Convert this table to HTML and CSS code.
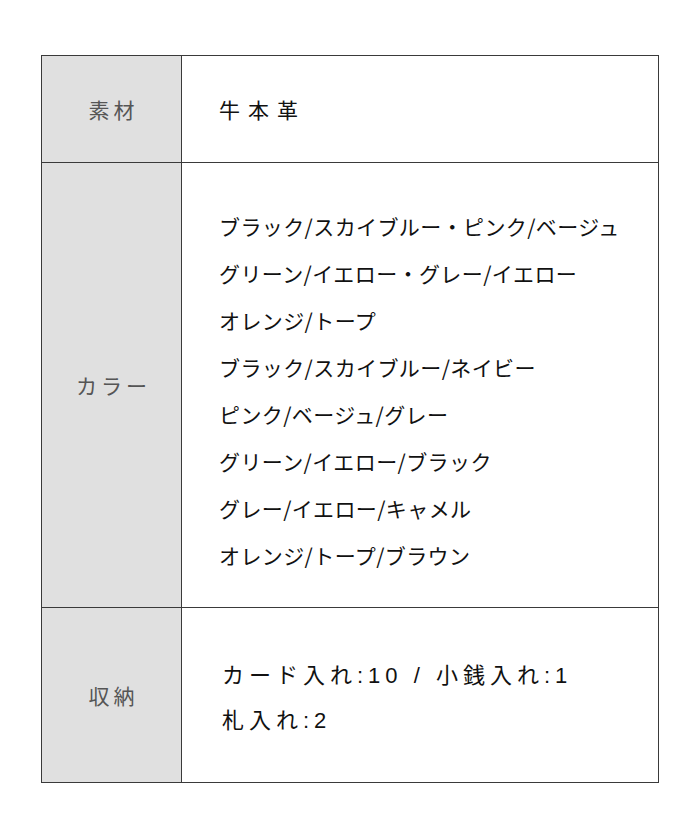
FILE: index.html
```html
<!DOCTYPE html>
<html lang="ja">
<head>
<meta charset="utf-8">
<link rel="stylesheet" href="styles.css">
</head>
<body>
<table class="spec">
  <tr class="row-material">
    <th class="label">素材</th>
    <td class="value"><p class="line">牛本革</p></td>
  </tr>
  <tr class="row-color">
    <th class="label">カラー</th>
    <td class="value colors">
      <p class="line">ブラック/スカイブルー・ピンク/ベージュ</p>
      <p class="line">グリーン/イエロー・グレー/イエロー</p>
      <p class="line">オレンジ/トープ</p>
      <p class="line">ブラック/スカイブルー/ネイビー</p>
      <p class="line">ピンク/ベージュ/グレー</p>
      <p class="line">グリーン/イエロー/ブラック</p>
      <p class="line">グレー/イエロー/キャメル</p>
      <p class="line">オレンジ/トープ/ブラウン</p>
    </td>
  </tr>
  <tr class="row-storage">
    <th class="label">収納</th>
    <td class="value storage">
      <p class="line">カード入れ:10 / 小銭入れ:1</p>
      <p class="line">札入れ:2</p>
    </td>
  </tr>
</table>
</body>
</html>
```

FILE: styles.css
```css
html, body {
  margin: 0;
  padding: 0;
  background: #ffffff;
}
body {
  padding: 55px 0 0 41px;
  font-family: "Noto Sans CJK JP", "Noto Sans", sans-serif;
}
.spec {
  border-collapse: collapse;
  width: 618px;
  border: 1px solid #3a3a3a;
}
.spec th, .spec td {
  border: 1px solid #3a3a3a;
  padding: 0;
  vertical-align: middle;
}
.label {
  width: 139px;
  background: #e0e0e0;
  color: #555555;
  font-weight: 400;
  font-size: 21px;
  letter-spacing: 4px;
  text-indent: 4px;
  text-align: center;
}
.value {
  color: #111111;
  font-size: 21px;
  padding-left: 37px !important;
  text-align: left;
}
.line {
  margin: 0;
}
.row-material {
  height: 107px;
}
.row-material .line {
  letter-spacing: 8px;
}
.row-color {
  height: 445px;
}
.colors {
  padding-top: 40px !important;
  padding-bottom: 28px !important;
}
.colors .line {
  line-height: 47px;
  letter-spacing: 0.4px;
}
.row-storage {
  height: 175px;
}
.storage {
  padding-left: 40px !important;
  padding-top: 6px !important;
}
.storage .line {
  font-family: "Liberation Sans", "Noto Sans CJK JP", sans-serif;
  line-height: 45px;
  font-size: 22px;
  letter-spacing: 5px;
  font-weight: 400;
}
```
